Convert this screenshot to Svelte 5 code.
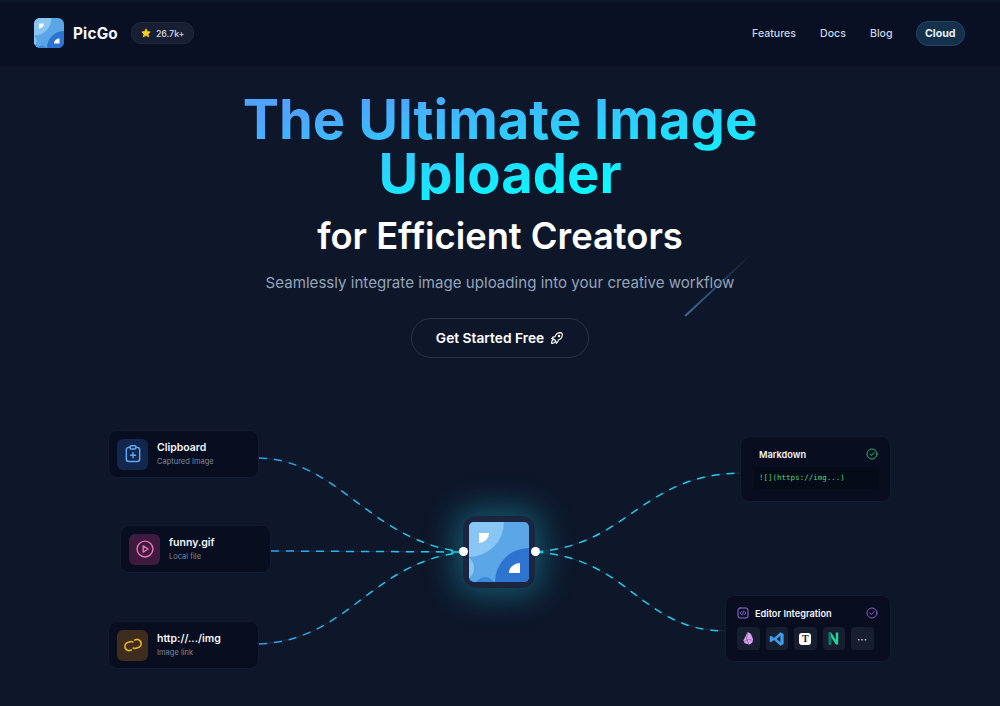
<script lang="ts">
	const navLinks = ['Features', 'Docs', 'Blog'];

	const leftWires = [
		'M259 458 C 340 460, 370 542, 464 552',
		'M271 551 L 464 552',
		'M259 644 C 350 640, 370 562, 464 552'
	];
	const rightWires = [
		'M535 552 C 630 545, 640 475, 740 473',
		'M535 552 C 630 558, 640 630, 725 631'
	];
</script>

{#snippet logo(id: string)}
	<svg viewBox="0 0 60 60" class="logo-svg" aria-hidden="true">
		<defs>
			<clipPath id={id}><rect width="60" height="60" rx="5" /></clipPath>
		</defs>
		<g clip-path="url(#{id})">
			<rect width="60" height="60" fill="#5aa6e6" />
			<circle cx="0" cy="0" r="35" fill="#8ac6f4" />
			<circle cx="-8" cy="46" r="13" fill="#8ac6f4" />
			<circle cx="16" cy="65" r="10" fill="#3d88da" />
			<circle cx="60" cy="60" r="34" fill="#2c74d0" />
			<path d="M10 11h10a10 10 0 0 1-10 10z" fill="#fff" />
			<path d="M51 41v10H40a11 10 0 0 1 11-10z" fill="#fff" />
		</g>
	</svg>
{/snippet}

<div class="page">
	<nav class="nav">
		<div class="brand">
			<span class="brand-logo">{@render logo('clip-nav')}</span>
			<span class="brand-name">PicGo</span>
			<span class="stars">
				<svg viewBox="0 0 24 24" width="10" height="10" aria-hidden="true">
					<path d="M12 2l3 6.600 7 .8-5.200 4.800 1.500 7L12 17.600 5.700 21.200l1.500-7L2 9.400l7-.8z" fill="#fcd015" stroke="#fcd015" stroke-width="2" stroke-linejoin="round" />
				</svg>
				26.7k+
			</span>
		</div>
		<div class="links">
			{#each navLinks as link}
				<a href="#top" class="link">{link}</a>
			{/each}
			<a href="#top" class="cloud">Cloud</a>
		</div>
	</nav>

	<header class="hero">
		<h1>The Ultimate Image<br />Uploader</h1>
		<h2>for Efficient Creators</h2>
		<p>Seamlessly integrate image uploading into your creative workflow</p>
		<button type="button" class="cta">
			Get Started Free
			<svg viewBox="0 0 24 24" width="16" height="16" fill="none" stroke="#fff" stroke-width="1.700" stroke-linejoin="round" stroke-linecap="round" aria-hidden="true">
				<path d="M4 13a8 8 0 0 1 7 7a6 6 0 0 0 3-5a9 9 0 0 0 6-8a3 3 0 0 0-3-3a9 9 0 0 0-8 6a6 6 0 0 0-5 3" />
				<path d="M7 14a6 6 0 0 0-3 6a6 6 0 0 0 6-3" />
				<circle cx="15" cy="9" r="1" />
			</svg>
		</button>
		<span class="comet"></span>
	</header>

	<section class="flow">
		<svg class="wires" viewBox="0 0 1000 706" aria-hidden="true">
			<defs>
				<linearGradient id="wire-left" gradientUnits="userSpaceOnUse" x1="259" y1="0" x2="464" y2="0">
					<stop offset="0" stop-color="#2a9fe8" />
					<stop offset="1" stop-color="#22d3ee" />
				</linearGradient>
			</defs>
			{#each [...leftWires, ...rightWires] as d}
				<path class="track" {d} />
			{/each}
			{#each leftWires as d}
				<path class="dash" stroke="url(#wire-left)" {d} />
			{/each}
			{#each rightWires as d}
				<path class="dash" stroke="#22c8e8" {d} />
			{/each}
		</svg>

		<div class="source clipboard">
			<span class="tile blue">
				<svg viewBox="0 0 24 24" width="20" height="20" fill="none" stroke="currentColor" stroke-width="1.700" stroke-linecap="round" stroke-linejoin="round" aria-hidden="true">
					<rect x="8.500" y="2" width="7" height="4" rx="1.200" />
					<path d="M8.500 4H7a3 3 0 0 0-3 3v11a3 3 0 0 0 3 3h10a3 3 0 0 0 3-3V7a3 3 0 0 0-3-3h-1.500" />
					<path d="M12 10.500v6M9 13.500h6" />
				</svg>
			</span>
			<div><strong>Clipboard</strong><small>Captured Image</small></div>
		</div>

		<div class="source gif">
			<span class="tile pink">
				<svg viewBox="0 0 24 24" width="20" height="20" fill="none" stroke="currentColor" stroke-width="1.700" stroke-linejoin="round" aria-hidden="true">
					<circle cx="12" cy="12" r="9.500" />
					<path d="M9.800 8.200l6 3.800-6 3.800z" />
				</svg>
			</span>
			<div><strong>funny.gif</strong><small>Local file</small></div>
		</div>

		<div class="source url">
			<span class="tile amber">
				<svg viewBox="0 0 24 24" width="20" height="20" fill="none" stroke="currentColor" stroke-width="2" stroke-linecap="round" aria-hidden="true">
					<g transform="rotate(-20 12 12)">
						<path d="M13 8.500a5 5 0 0 0-4-1.500H7a5 5 0 0 0 0 10h1" />
						<path d="M11 15.500a5 5 0 0 0 4 1.500h2a5 5 0 0 0 0-10h-1" />
					</g>
				</svg>
			</span>
			<div><strong>http://.../img</strong><small>Image link</small></div>
		</div>

		<div class="hub">
			<span class="port left"></span>
			{@render logo('clip-hub')}
			<span class="port right"></span>
		</div>

		<div class="output markdown">
			<div class="output-head">
				<strong>Markdown</strong>
				<svg viewBox="0 0 24 24" width="12" height="12" fill="none" stroke="#22b573" stroke-width="2" stroke-linecap="round" stroke-linejoin="round" aria-hidden="true">
					<circle cx="12" cy="12" r="10" />
					<path d="M8 12.500l3 2.500 5-6" />
				</svg>
			</div>
			<code>![](https://img...)</code>
		</div>

		<div class="output editors">
			<div class="output-head">
				<span class="code-icon">
					<svg viewBox="0 0 24 24" width="12" height="12" fill="none" stroke="#a06be8" stroke-width="2" stroke-linecap="round" stroke-linejoin="round" aria-hidden="true">
						<rect x="2" y="2" width="20" height="20" rx="4" />
						<path d="M9 9l-3 3 3 3M15 9l3 3-3 3M13 8l-2 8" stroke-width="1.600" />
					</svg>
				</span>
				<strong>Editor Integration</strong>
				<svg class="check" viewBox="0 0 24 24" width="12" height="12" fill="none" stroke="#8a5cd6" stroke-width="2" stroke-linecap="round" stroke-linejoin="round" aria-hidden="true">
					<circle cx="12" cy="12" r="10" />
					<path d="M8 12.500l3 2.500 5-6" />
				</svg>
			</div>
			<div class="apps">
				<span class="app">
					<svg viewBox="0 0 16 16" width="15" height="15" aria-hidden="true">
						<path d="M7 1l3.500 2 2.500 6-1 3.500-3 2-5-1.500-1.500-3 2-3.500z" fill="#d8a4e8" />
						<path d="M7 1L6 8.500l2.500 6M3.500 11l4.500-2 4.500 1" fill="none" stroke="#7a4aa8" stroke-width=".7" />
					</svg>
				</span>
				<span class="app">
					<svg viewBox="0 0 24 24" width="16" height="16" aria-hidden="true">
						<path d="M17 2l5 2.500v15L17 22 7.500 13.500 3 17l-2-1.200V8.200L3 7l4.500 3.500zM17 7.500L11.500 12l5.500 4.500z" fill="#3d9be9" />
					</svg>
				</span>
				<span class="app">
					<span class="typora">T</span>
				</span>
				<span class="app">
					<svg viewBox="0 0 16 16" width="15" height="15" aria-hidden="true">
						<path d="M3 1.500h2.500l5 8V1.500H13v13h-2.500l-5-8v8H3z" fill="#1fd8a0" />
						<path d="M3 1.500h2.500v13H3z" fill="#0e7a68" />
					</svg>
				</span>
				<span class="app dots">•••</span>
			</div>
		</div>
	</section>
</div>

<style>
	:global(body) {
		background: #0f172a;
		font-family: Inter, 'Liberation Sans', sans-serif;
	}
	.page {
		height: 706px;
		overflow: hidden;
		display: flex;
		flex-direction: column;
		background: #0e172a;
		color: #fff;
	}
	.nav {
		box-sizing: border-box;
		height: 64px;
		margin-top: 2px;
		padding: 0 35px 2px 34px;
		flex: none;
		display: flex;
		align-items: center;
		justify-content: space-between;
		background: #091024;
	}
	.brand {
		display: flex;
		align-items: center;
	}
	.brand-logo {
		display: block;
		width: 30px;
		height: 30px;
		margin-right: 9px;
		border-radius: 6px;
		overflow: hidden;
	}
	.logo-svg {
		display: block;
		width: 100%;
		height: 100%;
	}
	.brand-name {
		font-size: 15.300px;
		font-weight: 700;
		letter-spacing: 0.2px;
		color: #f4f6fa;
	}
	.stars {
		display: flex;
		align-items: center;
		gap: 5px;
		height: 20px;
		margin-left: 13px;
		padding: 0 8px 0 9px;
		border: 1px solid #20283c;
		border-radius: 10px;
		background: #181f33;
		font-size: 8.800px;
		font-weight: 500;
		color: #d5d9e2;
	}
	.links {
		display: flex;
		align-items: center;
	}
	.link {
		margin-right: 24px;
		font-size: 10.600px;
		font-weight: 500;
		color: #cbd5e1;
		text-decoration: none;
	}
	.link:nth-child(3) {
		margin-right: 23px;
	}
	.cloud {
		padding: 5px 8.500px;
		border: 1px solid #1f4764;
		border-radius: 12px;
		background: #15304a;
		font-size: 10.600px;
		font-weight: 700;
		color: #e8f0f8;
		text-decoration: none;
	}
	.hero {
		position: relative;
		display: flex;
		flex-direction: column;
		align-items: center;
		padding: 26px 0 1px;
	}
	h1 {
		margin: 0;
		font-size: 54.400px;
		line-height: 54px;
		font-weight: 700;
		text-align: center;
		background: linear-gradient(170deg, #4fa4ff 15%, #0af9ff 80%);
		-webkit-background-clip: text;
		background-clip: text;
		color: transparent;
	}
	h2 {
		margin: 14px 0 0;
		font-size: 36.300px;
		line-height: 44px;
		font-weight: 600;
		color: #fff;
	}
	p {
		margin: 13px 0 0;
		font-size: 15.100px;
		line-height: 24px;
		color: #94a3b8;
	}
	.cta {
		display: flex;
		align-items: center;
		gap: 5px;
		height: 40px;
		margin-top: 23px;
		padding: 0 23px 0 24px;
		border: 1px solid #2b3447;
		border-radius: 20px;
		background: transparent;
		font-family: inherit;
		font-size: 13.750px;
		font-weight: 600;
		color: #fff;
	}
	.comet {
		position: absolute;
		left: 685px;
		top: 249px;
		width: 90px;
		height: 1.500px;
		background: linear-gradient(90deg, #3b6d92, rgba(59, 109, 146, 0));
		transform: rotate(-43deg);
		transform-origin: left center;
	}
	.flow {
		position: relative;
		flex: 1;
	}
	.wires {
		position: absolute;
		left: 0;
		top: -359px;
		width: 1000px;
		height: 706px;
		pointer-events: none;
	}
	.wires path {
		fill: none;
	}
	.track {
		stroke: #1f2a40;
		stroke-width: 1;
	}
	.dash {
		stroke-width: 1.500;
		stroke-dasharray: 8 7;
	}
	.source,
	.output {
		position: absolute;
		box-sizing: border-box;
		border: 1px solid #121b30;
		border-radius: 9px;
		background: #080e1f;
	}
	.source {
		display: flex;
		align-items: center;
		gap: 9px;
		width: 151px;
		height: 48px;
		padding-left: 8px;
	}
	.clipboard {
		left: 108px;
		top: 71px;
	}
	.gif {
		left: 120px;
		top: 166px;
	}
	.url {
		left: 108px;
		top: 262px;
	}
	.tile {
		display: flex;
		align-items: center;
		justify-content: center;
		width: 31px;
		height: 31px;
		border-radius: 6px;
	}
	.blue {
		background: #12274e;
		color: #62a9f2;
	}
	.pink {
		background: #3d1a3e;
		color: #ea72b8;
	}
	.amber {
		background: #3e2c1c;
		color: #eab523;
	}
	.source strong {
		display: block;
		font-size: 10.500px;
		line-height: 14px;
		font-weight: 600;
		color: #f4f6fa;
	}
	.source small {
		display: block;
		margin-top: 2px;
		font-size: 7.500px;
		line-height: 10px;
		color: #7c889d;
	}
	.hub {
		position: absolute;
		left: 463px;
		top: 157px;
		box-sizing: border-box;
		width: 72px;
		height: 72px;
		padding: 6px;
		border-radius: 14px;
		background: #1c2540;
		box-shadow: 0 0 30px 8px rgba(30, 200, 225, 0.35);
	}
	.port {
		position: absolute;
		top: 31px;
		width: 9px;
		height: 9px;
		border-radius: 50%;
		background: #fff;
	}
	.left {
		left: -4px;
	}
	.right {
		right: -5px;
	}
	.output strong {
		font-size: 9.200px;
		font-weight: 600;
		color: #f4f6fa;
	}
	.output-head {
		display: flex;
		align-items: center;
	}
	.markdown {
		left: 740px;
		top: 77px;
		width: 151px;
		height: 66px;
		padding: 11px 12px 0 18px;
	}
	.markdown .output-head {
		justify-content: space-between;
	}
	.markdown code {
		display: block;
		box-sizing: border-box;
		height: 22px;
		margin: 7px -1px 0 -5px;
		padding-left: 5px;
		border-radius: 3px;
		background: #060b18;
		font-family: 'DejaVu Sans Mono', monospace;
		font-size: 7.500px;
		line-height: 21px;
		color: #4fd08f;
	}
	.editors {
		left: 725px;
		top: 236px;
		width: 166px;
		height: 67px;
		padding: 11px 12px 0 11px;
	}
	.code-icon {
		display: flex;
		margin-right: 6px;
	}
	.check {
		margin-left: auto;
	}
	.apps {
		display: flex;
		gap: 6px;
		margin-top: 8px;
	}
	.app {
		display: flex;
		align-items: center;
		justify-content: center;
		width: 22.500px;
		height: 23px;
		border-radius: 4px;
		background: #171e30;
	}
	.typora {
		width: 12px;
		height: 12px;
		border-radius: 3px;
		background: #fff;
		font-family: 'Liberation Serif', serif;
		font-size: 10px;
		font-weight: 700;
		line-height: 12px;
		text-align: center;
		color: #222;
	}
	.dots {
		font-size: 5px;
		letter-spacing: 0.6px;
		color: #cbd5e1;
	}
</style>
